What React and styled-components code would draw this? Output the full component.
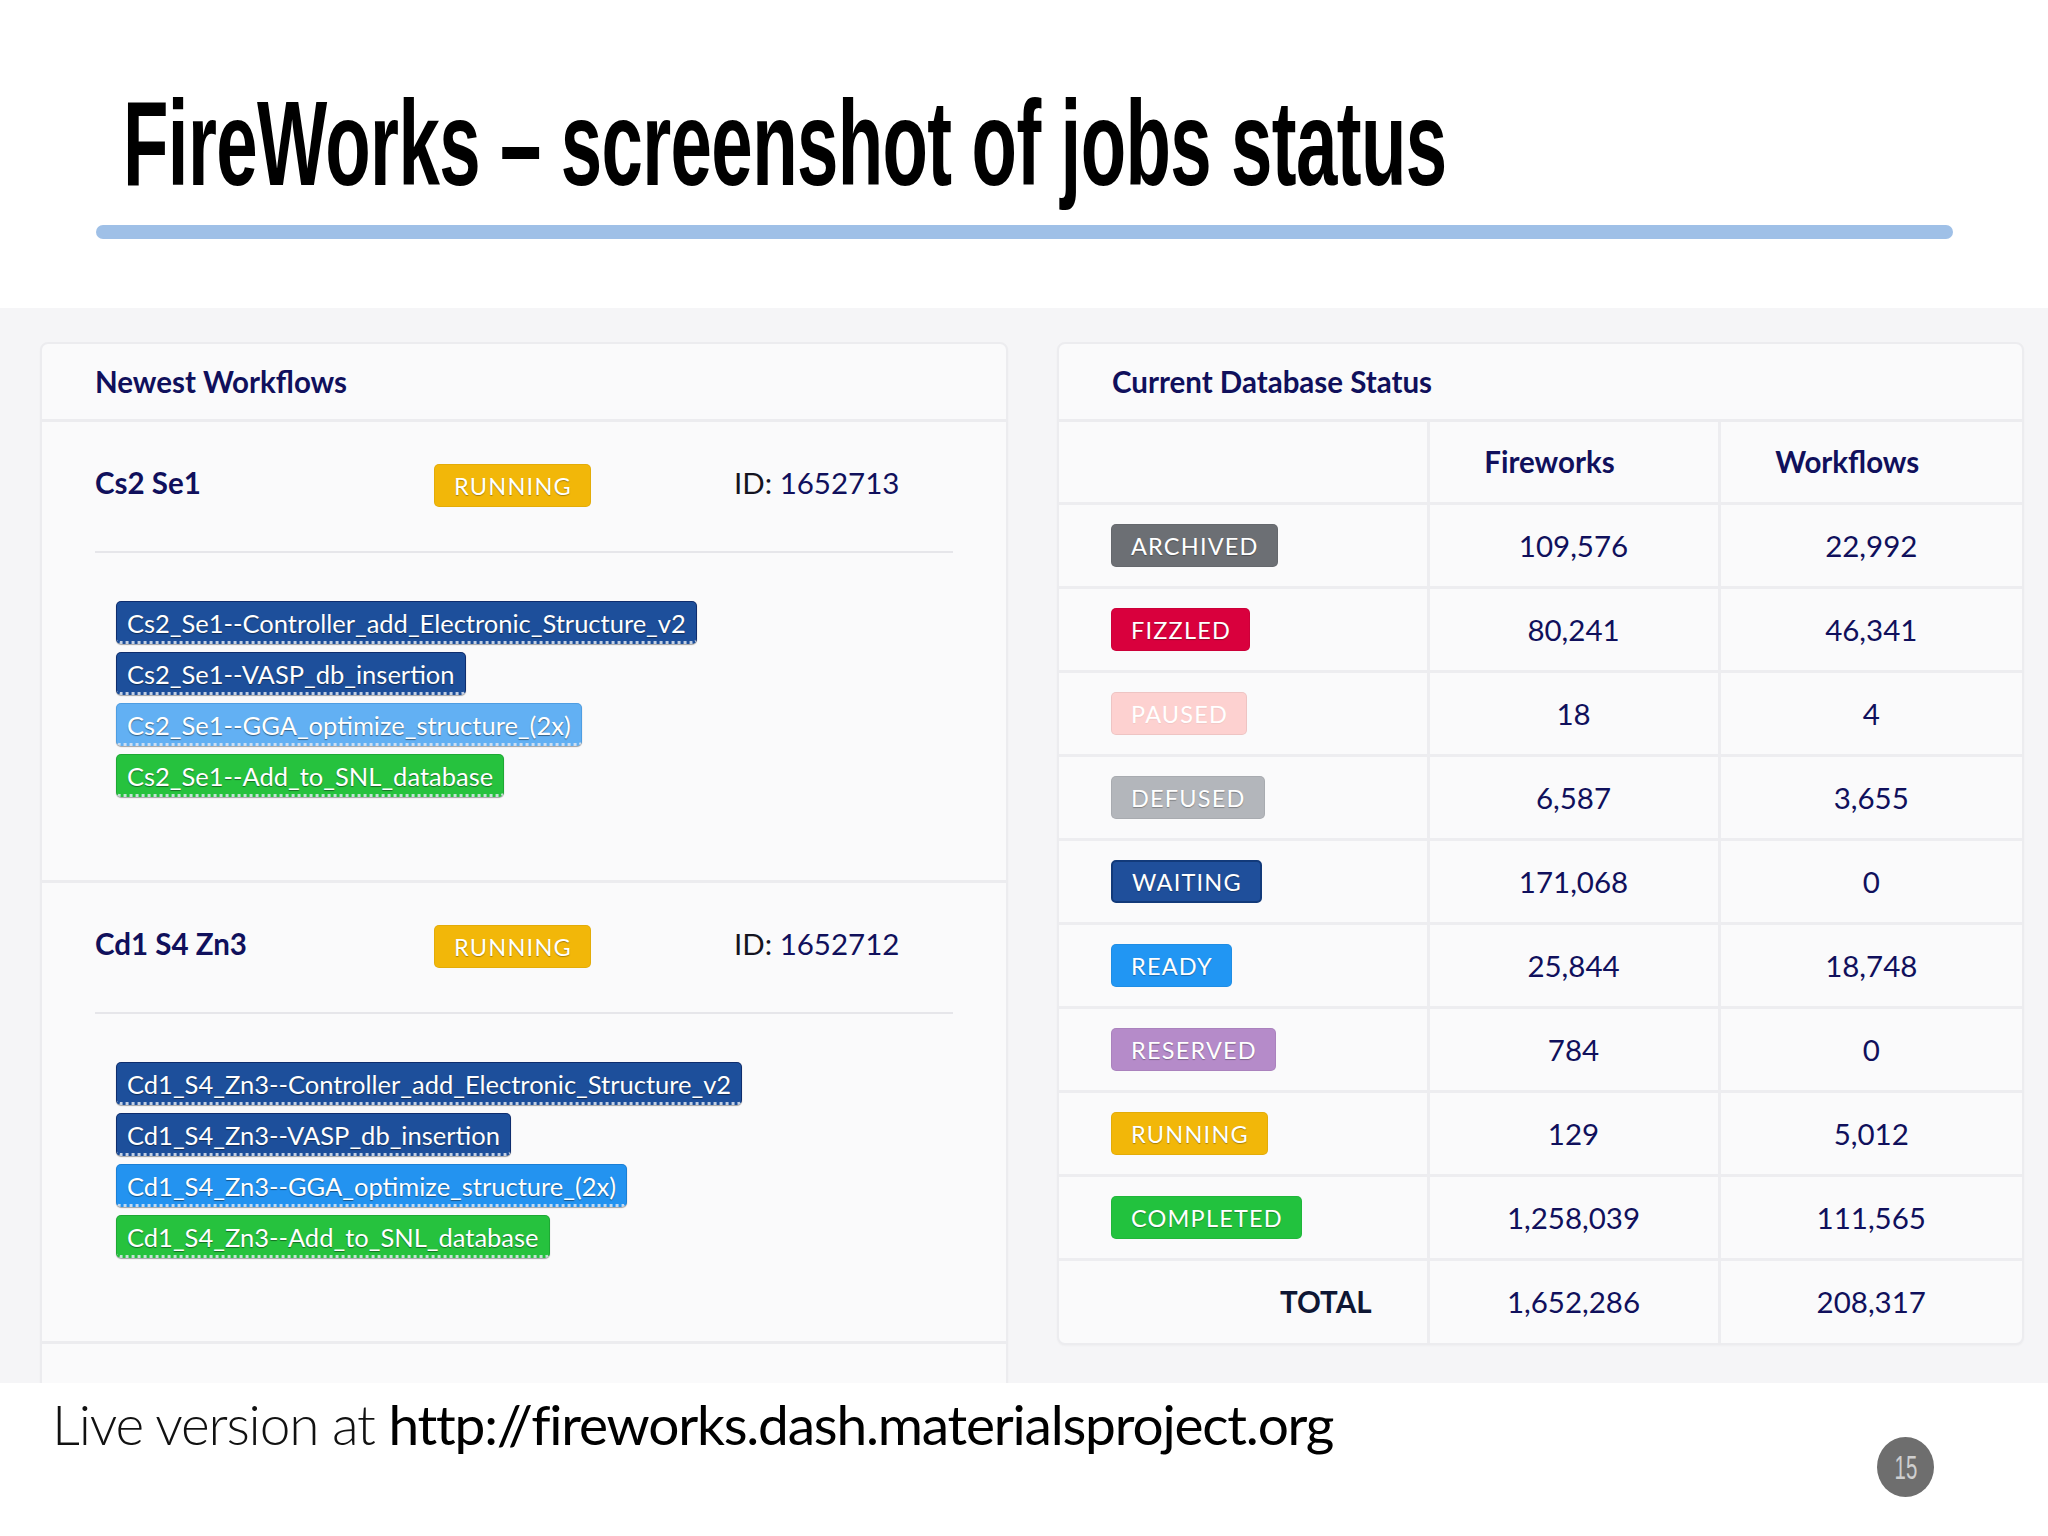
import React from 'react';
import styled, { createGlobalStyle } from 'styled-components';

const Global = createGlobalStyle`
  html, body { margin: 0; padding: 0; background: #fff; }
  body { width: 2048px; height: 1536px; overflow: hidden; font-family: Lato, "Open Sans", sans-serif; }
  * { box-sizing: border-box; }
`;

const NAVY = '#10105c';

const Slide = styled.div`
  width: 2048px;
  height: 1536px;
  display: flex;
  flex-direction: column;
  background: #fff;
`;

const TitleArea = styled.header`
  height: 308px;
  padding: 83px 0 0 96px;
  display: flex;
  flex-direction: column;
  flex-shrink: 0;
`;

const Title = styled.h1`
  margin: 0 0 0 27px;
  font-family: "Liberation Sans", Arial, sans-serif;
  font-weight: 700;
  font-size: 120px;
  line-height: 120px;
  color: #000;
  white-space: nowrap;
  transform: scaleX(0.62);
  transform-origin: left top;
  letter-spacing: -1px;
`;

const TitleBar = styled.div`
  margin-top: 22px;
  width: 1857px;
  height: 14px;
  border-radius: 7px;
  background: #9fc0e7;
`;

const Board = styled.main`
  height: 1075px;
  flex-shrink: 0;
  background: #f5f5f7;
  padding: 34px 24px 0 40px;
  display: grid;
  grid-template-columns: 968px 967px;
  column-gap: 49px;
  align-items: start;
  overflow: hidden;
`;

const Panel = styled.section`
  background: #fafafb;
  border: 2px solid #ececef;
  border-radius: 8px;
  box-shadow: 0 1px 2px rgba(0, 0, 0, 0.03);
  overflow: hidden;
`;

const PanelHeader = styled.h2`
  margin: 0;
  height: 78px;
  padding-left: 53px;
  display: flex;
  align-items: center;
  border-bottom: 3px solid #ececef;
  font-weight: 700;
  font-size: 29.5px;
  color: ${NAVY};
`;

const WorkflowSection = styled.div`
  padding: 42px 53px 83px 53px;
  border-bottom: 3px solid #ececef;
  min-height: ${p => (p.$filler ? '200px' : 'auto')};
`;

const WorkflowRow = styled.div`
  display: grid;
  grid-template-columns: 339px 300px 1fr;
  height: 43px;
  align-items: center;
`;

const WorkflowName = styled.div`
  font-weight: 700;
  font-size: 29.5px;
  color: ${NAVY};
  margin-top: -6px;
`;

const WorkflowId = styled.div`
  font-size: 29.5px;
  color: ${NAVY};
  margin-top: -6px;
  span { color: #141420; }
`;

const Rule = styled.hr`
  margin: 44px 0 48px;
  border: 0;
  height: 2px;
  background: #e6e6ea;
`;

const TagList = styled.div`
  display: flex;
  flex-direction: column;
  align-items: flex-start;
  gap: 8px;
  padding-left: 21px;
`;

const TAGS = {
  dark: { bg: '#1d4f9b', border: '#0e2d6e' },
  light: { bg: '#62b0f3', border: '#4e9de2' },
  blue: { bg: '#2393f0', border: '#1a7fd6' },
  green: { bg: '#26c23e', border: '#1ea834' },
};

const Tag = styled.span`
  height: 43px;
  display: inline-flex;
  align-items: center;
  padding: 2px 10px 0 10px;
  font-size: 25.5px;
  color: #fff;
  text-shadow: 0 1px 1px rgba(0, 0, 0, 0.45);
  background: ${p => TAGS[p.$kind].bg};
  border: 1px solid ${p => TAGS[p.$kind].border};
  border-bottom: 3px dotted rgba(225, 230, 240, 0.85);
  border-radius: 5px;
  box-shadow: 0 1px 1px rgba(0, 0, 0, 0.35);
  white-space: nowrap;
`;

const BADGES = {
  ARCHIVED: '#6c6f74',
  FIZZLED: '#d9003d',
  PAUSED: '#fdd1d0',
  DEFUSED: '#b3b6bb',
  WAITING: '#1f4f9b',
  READY: '#2196f3',
  RESERVED: '#b58bc9',
  RUNNING: '#f2b709',
  COMPLETED: '#22c23e',
};

const Badge = styled.span`
  display: inline-flex;
  align-items: center;
  height: 43px;
  padding: 1px 18px 0 19px;
  border-radius: 5px;
  background: ${p => BADGES[p.$status]};
  border: ${p => (p.$status === 'WAITING' ? '2px solid #123a7a' : '1px solid rgba(0,0,0,0.06)')};
  color: #fff;
  font-size: 23.5px;
  font-weight: 400;
  letter-spacing: 1.2px;
  text-shadow: 0 1px 1px rgba(0, 0, 0, ${p => (p.$status === 'PAUSED' ? '0.05' : '0.3')});
  white-space: nowrap;
`;

const Table = styled.table`
  width: 100%;
  border-collapse: collapse;
  table-layout: fixed;
`;

const HeadCell = styled.th`
  height: 81px;
  font-weight: 700;
  font-size: 29.5px;
  color: ${NAVY};
  text-align: center;
  padding: 0 48px 0 0;
  & + & { border-left: 3px solid #ededf0; }
`;

const Cell = styled.td`
  height: 84px;
  border-top: 3px solid #ededf0;
  font-size: 29.5px;
  color: ${NAVY};
  text-align: ${p => p.$align || 'center'};
  padding: ${p => p.$pad || '0'};
  & + & { border-left: 3px solid #ededf0; }
`;

const TotalLabel = styled.span`
  color: #0e1633;
  font-weight: 700;
`;

const Footer = styled.footer`
  flex: 1;
  display: flex;
  justify-content: space-between;
  align-items: flex-start;
  padding: 8px 114px 0 52px;
`;

const FooterText = styled.p`
  margin: 0;
  font-size: 55px;
  line-height: 66px;
  color: #111;
  letter-spacing: -1.2px;
  font-weight: 300;
  b { font-weight: 400; color: #000; }
`;

const PageNum = styled.div`
  margin-top: 46px;
  width: 57px;
  height: 60px;
  border-radius: 50%;
  background: #6e6e6e;
  display: flex;
  align-items: center;
  justify-content: center;
  span {
    font-family: "Liberation Sans", Arial, sans-serif;
    font-size: 34px;
    color: #cfcfcf;
    transform: scaleX(0.6);
    display: inline-block;
  }
`;

const workflows = [
  {
    name: 'Cs2 Se1',
    id: '1652713',
    prefix: 'Cs2_Se1',
    kinds: ['dark', 'dark', 'light', 'green'],
  },
  {
    name: 'Cd1 S4 Zn3',
    id: '1652712',
    prefix: 'Cd1_S4_Zn3',
    kinds: ['dark', 'dark', 'blue', 'green'],
  },
];

const steps = [
  'Controller_add_Electronic_Structure_v2',
  'VASP_db_insertion',
  'GGA_optimize_structure_(2x)',
  'Add_to_SNL_database',
];

const stats = [
  ['ARCHIVED', '109,576', '22,992'],
  ['FIZZLED', '80,241', '46,341'],
  ['PAUSED', '18', '4'],
  ['DEFUSED', '6,587', '3,655'],
  ['WAITING', '171,068', '0'],
  ['READY', '25,844', '18,748'],
  ['RESERVED', '784', '0'],
  ['RUNNING', '129', '5,012'],
  ['COMPLETED', '1,258,039', '111,565'],
];

export default function App() {
  return (
    <Slide>
      <Global />
      <TitleArea>
        <Title>FireWorks – screenshot of jobs status</Title>
        <TitleBar />
      </TitleArea>
      <Board>
        <Panel>
          <PanelHeader>Newest Workflows</PanelHeader>
          {workflows.map(w => (
            <WorkflowSection key={w.id}>
              <WorkflowRow>
                <WorkflowName>{w.name}</WorkflowName>
                <div><Badge $status="RUNNING">RUNNING</Badge></div>
                <WorkflowId><span>ID:</span> {w.id}</WorkflowId>
              </WorkflowRow>
              <Rule />
              <TagList>
                {steps.map((s, i) => (
                  <Tag key={s} $kind={w.kinds[i]}>{`${w.prefix}--${s}`}</Tag>
                ))}
              </TagList>
            </WorkflowSection>
          ))}
          <WorkflowSection $filler />
        </Panel>
        <Panel>
          <PanelHeader>Current Database Status</PanelHeader>
          <Table>
            <colgroup>
              <col style={{ width: '369px' }} />
              <col style={{ width: '291px' }} />
              <col />
            </colgroup>
            <thead>
              <tr>
                <HeadCell />
                <HeadCell>Fireworks</HeadCell>
                <HeadCell>Workflows</HeadCell>
              </tr>
            </thead>
            <tbody>
              {stats.map(([s, f, w]) => (
                <tr key={s}>
                  <Cell $align="left" $pad="0 0 0 52px"><Badge $status={s}>{s}</Badge></Cell>
                  <Cell>{f}</Cell>
                  <Cell>{w}</Cell>
                </tr>
              ))}
              <tr>
                <Cell $align="right" $pad="0 55px 0 0"><TotalLabel>TOTAL</TotalLabel></Cell>
                <Cell>1,652,286</Cell>
                <Cell>208,317</Cell>
              </tr>
            </tbody>
          </Table>
        </Panel>
      </Board>
      <Footer>
        <FooterText>Live version at <b>http://fireworks.dash.materialsproject.org</b></FooterText>
        <PageNum><span>15</span></PageNum>
      </Footer>
    </Slide>
  );
}
